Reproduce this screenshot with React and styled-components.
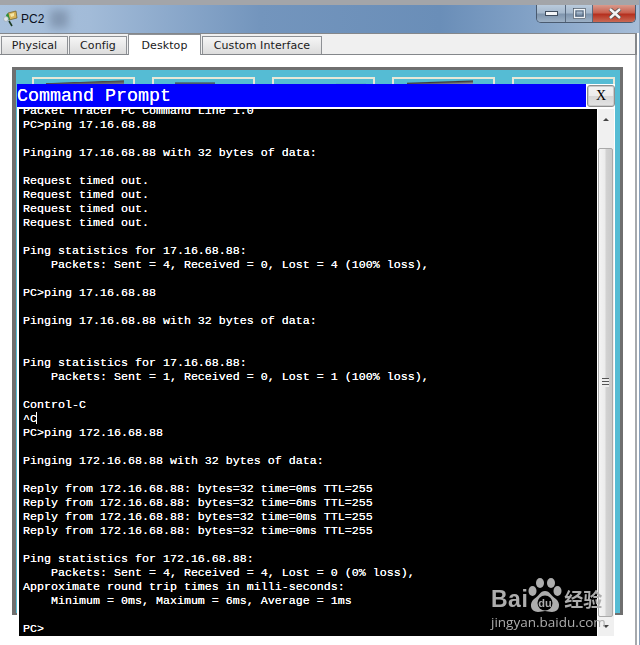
import styled, { createGlobalStyle } from "styled-components"

const GlobalStyle = createGlobalStyle`
  html, body {
    margin: 0;
    padding: 0;
    background: #fff;
  }
`

const Window = styled.div`
  position: relative;
  width: 640px;
  height: 645px;
  box-sizing: border-box;
  overflow: hidden;
  display: flex;
  flex-direction: column;
  font-family: "DejaVu Sans", "Liberation Sans", sans-serif;
  background: #fff;
  border-right: 1px solid #8aa0ba;
`

const TitleBar = styled.div`
  height: 28px;
  flex: none;
  display: flex;
  align-items: flex-start;
  justify-content: space-between;
  border-top: 5px solid #a3a5a9;
  margin-right: -1px;
  background: linear-gradient(90deg, #a9c1dc 0, #a2bbd8 90px, #7395bd 260px, #6a8eb8 440px, #85a4c8 540px, #a6bdd8 640px);
`

const TitleLeft = styled.div`
  display: flex;
  align-items: center;
  gap: 3px;
  height: 27px;
  padding-left: 3px;
`

const TitleText = styled.span`
  font-family: "Liberation Sans", sans-serif;
  font-size: 12px;
  color: #0a1020;
`

const Smudge = styled.span`
  width: 18px;
  height: 18px;
  margin-left: 3px;
  background: #8398b2;
  filter: blur(4px);
`

const Controls = styled.div`
  display: flex;
  width: 100px;
  height: 18px;
  margin-right: 4px;
  border: 1px solid #4a5b70;
  border-top: none;
  border-radius: 0 0 5px 5px;
  overflow: hidden;
  box-sizing: border-box;
`

const ControlButton = styled.div`
  width: ${p => p.$w}px;
  flex: none;
  display: flex;
  align-items: center;
  justify-content: center;
  border-right: ${p => (p.$close ? "none" : "1px solid #5a6b80")};
  box-sizing: border-box;
  background: ${p =>
    p.$close
      ? "linear-gradient(#d99a8c 0, #c8604f 45%, #b5301f 55%, #c96a55 100%)"
      : "linear-gradient(#b9cadc 0, #a5b8cc 45%, #7f95ad 55%, #9db1c6 100%)"};
`

const TabStrip = styled.div`
  height: 22px;
  flex: none;
  display: flex;
  align-items: flex-end;
  gap: 1px;
  padding-left: 1px;
  margin-right: 2px;
  background: #f0f0f0;
  border-top: 1px solid #84878b;
  border-bottom: 1px solid #84878b;
  border-right: 2px solid #84878b;
  box-sizing: border-box;
`

const Tab = styled.div`
  width: ${p => p.$w}px;
  height: ${p => (p.$active ? 21 : 18)}px;
  box-sizing: border-box;
  display: flex;
  align-items: center;
  justify-content: center;
  font-size: 11px;
  letter-spacing: 0.1px;
  color: #1a1a1a;
  border: 1px solid #8e9195;
  border-bottom: none;
  margin-bottom: ${p => (p.$active ? -1 : 0)}px;
  background: ${p => (p.$active ? "#fff" : "linear-gradient(#f6f6f6, #dcdcdc)")};
  position: relative;
`

const Panel = styled.div`
  flex: 1;
  margin-right: 2px;
  padding: 12px 12px 0 12px;
  background: #fff;
  border-right: 2px solid #a6a9ad;
`

const DesktopFrame = styled.div`
  width: 611px;
  height: 548px;
  box-sizing: border-box;
  border: 3px solid #6f6f6f;
  border-bottom-width: 2px;
  border-left-width: 4px;
  background: #55bcd4;
  padding: 7px 0 0 16px;
`

const TileRow = styled.div`
  display: flex;
  gap: 17px;
`

const Tile = styled.div`
  width: 103px;
  height: 12px;
  box-sizing: border-box;
  border: 2px solid #e8e8d8;
  padding-left: ${p => p.$left}px;
`

const TileArt = styled.div`
  width: ${p => p.$w}px;
  height: 5px;
  margin-top: 1px;
  background: ${p => p.$tone};
`

const CommandWindow = styled.div`
  position: absolute;
  left: 17px;
  top: 84px;
  width: 598px;
  height: 552px;
  background: #fff;
  display: flex;
  flex-direction: column;
`

const PromptHeader = styled.div`
  height: 23px;
  flex: none;
  display: flex;
  gap: 1px;
`

const PromptTitle = styled.div`
  flex: 1;
  padding-top: 2px;
  box-sizing: border-box;
  background: #0000ff;
  color: #fff;
  font-family: "Liberation Mono", monospace;
  font-size: 18.33px;
  line-height: 21px;
  white-space: pre;
  text-shadow: 0 0 0.6px #fff;
`

const CloseBox = styled.div`
  width: 28px;
  height: 22px;
  margin-top: 1px;
  box-sizing: border-box;
  border: 1px solid #8f8f8f;
  border-radius: 3px;
  box-shadow: inset 0 0 0 1px #c9c9c9;
  background: linear-gradient(#f2f2f2 0, #ececec 50%, #d6d6d6 52%, #e4e4e4 100%);
  display: flex;
  align-items: center;
  justify-content: center;
  font-family: "Liberation Serif", serif;
  font-size: 14px;
  color: #000;
`

const PromptBody = styled.div`
  flex: 1;
  min-height: 0;
  display: flex;
  margin-top: 2px;
  padding-left: 2px;
  gap: 1px;
`

const Terminal = styled.div`
  width: 578px;
  background: #000;
  overflow: hidden;
  padding-left: 4px;
  box-sizing: border-box;
`

const Output = styled.pre`
  margin: -5px 0 0;
  color: #fff;
  font-family: "Liberation Mono", "Courier New", monospace;
  font-size: 11.67px;
  line-height: 14px;
  text-shadow: 0 0 0.5px #fff;
`

const Caret = styled.span`
  display: inline-block;
  width: 1px;
  height: 12px;
  margin-left: -1px;
  vertical-align: -2px;
  background: #fff;
`

const ScrollBar = styled.div`
  width: 16px;
  flex: none;
  display: flex;
  flex-direction: column;
  align-items: center;
  background: #f0f0f0;
`

const ScrollArrow = styled.div`
  flex: none;
  height: ${p => p.$h}px;
  width: 100%;
  display: flex;
  align-items: center;
  justify-content: center;
  &::before {
    content: "";
    border-left: 3px solid transparent;
    border-right: 3px solid transparent;
    ${p => (p.$up ? "border-bottom: 3px solid #444;" : "border-top: 3px solid #444;")}
  }
`

const ScrollTrack = styled.div`
  flex: 1;
  width: 100%;
  padding-top: 19px;
  box-sizing: border-box;
`

const ScrollThumb = styled.div`
  width: 15px;
  height: 469px;
  box-sizing: border-box;
  border: 1px solid #a9a9a9;
  border-radius: 2px;
  background: linear-gradient(90deg, #f4f4f4 0, #ececec 45%, #d2d2d2 55%, #c9c9c9 100%);
  display: flex;
  align-items: center;
  justify-content: center;
`

const Grip = styled.div`
  width: 7px;
  height: 9px;
  background: repeating-linear-gradient(#555 0, #555 1px, #eee 1px, #eee 3px);
`

const Watermark = styled.div`
  position: absolute;
  left: 491px;
  top: 577px;
  width: 116px;
  color: #adadad;
  font-family: "Open Sans", "Liberation Sans", sans-serif;
  filter: blur(0.3px);
`

const BrandRow = styled.div`
  display: flex;
  align-items: flex-end;
  height: 37px;
`

const BrandWord = styled.span`
  font-size: 23px;
  line-height: 30px;
  font-weight: 700;
  font-family: "Liberation Sans", sans-serif;
  letter-spacing: 0.5px;
`

const BrandCn = styled.span`
  font-family: "Noto Sans CJK SC", sans-serif;
  font-size: 19px;
  line-height: 30px;
  font-weight: 700;
  margin-left: 2px;
`

const BrandUrl = styled.div`
  font-size: 13.5px;
  line-height: 16px;
  margin-top: 0;
  white-space: nowrap;
`

const TRANSCRIPT = `Packet Tracer PC Command Line 1.0
PC>ping 17.16.68.88

Pinging 17.16.68.88 with 32 bytes of data:

Request timed out.
Request timed out.
Request timed out.
Request timed out.

Ping statistics for 17.16.68.88:
    Packets: Sent = 4, Received = 0, Lost = 4 (100% loss),

PC>ping 17.16.68.88

Pinging 17.16.68.88 with 32 bytes of data:


Ping statistics for 17.16.68.88:
    Packets: Sent = 1, Received = 0, Lost = 1 (100% loss),

Control-C
^C`

const TRANSCRIPT_END = `
PC>ping 172.16.68.88

Pinging 172.16.68.88 with 32 bytes of data:

Reply from 172.16.68.88: bytes=32 time=0ms TTL=255
Reply from 172.16.68.88: bytes=32 time=6ms TTL=255
Reply from 172.16.68.88: bytes=32 time=0ms TTL=255
Reply from 172.16.68.88: bytes=32 time=0ms TTL=255

Ping statistics for 172.16.68.88:
    Packets: Sent = 4, Received = 4, Lost = 0 (0% loss),
Approximate round trip times in milli-seconds:
    Minimum = 0ms, Maximum = 6ms, Average = 1ms

PC>`

const TILES = [
  { left: 12, w: 78, tone: "linear-gradient(178deg, transparent 35%, #4a4a4a 45%, #8a8f94 100%)" },
  { left: 21, w: 40, tone: "linear-gradient(#55bcd4 30%, #4a5a62 60%, #3d6f80 100%)" },
  { left: 62, w: 30, tone: "linear-gradient(#55bcd4 55%, #4f9fb6 100%)" },
  { left: 13, w: 66, tone: "linear-gradient(178deg, transparent 30%, #3c3c3c 45%, #c4c8cc 100%)" },
  { left: 36, w: 40, tone: "linear-gradient(#55bcd4 55%, #7fc4d6 100%)" },
]

function AppIcon() {
  return (
    <svg width="15" height="17" viewBox="0 0 15 17">
      <path d="M5 3 L13 1 L14 8 L6 10 Z" fill="#d9b45a" stroke="#6b5a20" strokeWidth="0.7" />
      <path d="M5 3 L7 9 L4 11 L3 5 Z" fill="#2f8f3a" />
      <path d="M7 4 L11 3 L11 6 L8 7 Z" fill="#f3e6a8" />
      <circle cx="3" cy="9" r="2.4" fill="#dfe6ea" stroke="#9aa5ad" strokeWidth="0.6" />
      <path d="M6 11 L9 16" stroke="#1c3a22" strokeWidth="1.6" />
    </svg>
  )
}

function MinimizeGlyph() {
  return (
    <svg width="13" height="6" viewBox="0 0 13 6">
      <rect x="0.5" y="0.5" width="12" height="4" fill="#f4f6f8" stroke="#3f4d5e" />
    </svg>
  )
}

function MaximizeGlyph() {
  return (
    <svg width="13" height="11" viewBox="0 0 13 11">
      <rect x="1" y="1" width="11" height="9" fill="none" stroke="#f0f3f6" strokeWidth="2" />
      <rect x="0.5" y="0.5" width="12" height="10" fill="none" stroke="#3f4d5e" strokeWidth="0.7" />
      <rect x="3" y="3" width="7" height="5" fill="none" stroke="#3f4d5e" strokeWidth="0.7" />
    </svg>
  )
}

function CloseGlyph() {
  return (
    <svg width="14" height="11" viewBox="0 0 14 11">
      <path d="M2 1 L12 10 M12 1 L2 10" stroke="#4d4d4d" strokeWidth="4" />
      <path d="M2 1 L12 10 M12 1 L2 10" stroke="#f4f4f4" strokeWidth="2.4" />
    </svg>
  )
}

function PawMark() {
  return (
    <svg width="34" height="37" viewBox="0 0 34 37" style={{ flex: "none" }}>
      <ellipse cx="12" cy="6" rx="4" ry="5" fill="currentColor" />
      <ellipse cx="23" cy="6" rx="4" ry="5" fill="currentColor" />
      <ellipse cx="4.5" cy="14" rx="4" ry="5" fill="currentColor" />
      <ellipse cx="29.5" cy="14" rx="4" ry="5" fill="currentColor" />
      <path d="M17 14 C22 14 23 19 28 22 C33 26 32 35 24 35 C21 35 19 34 17 34 C15 34 13 35 10 35 C2 35 1 26 6 22 C11 19 12 14 17 14 Z" fill="currentColor" />
      <circle cx="17" cy="26" r="7.5" fill="#000" />
      <text x="17" y="30" textAnchor="middle" fontSize="11" fontWeight="700" fontFamily="Liberation Sans, sans-serif" fill="currentColor">du</text>
    </svg>
  )
}

export default function App() {
  return (
    <Window>
      <GlobalStyle />
      <TitleBar>
        <TitleLeft>
          <AppIcon />
          <TitleText>PC2</TitleText>
          <Smudge />
        </TitleLeft>
        <Controls>
          <ControlButton $w={29}><MinimizeGlyph /></ControlButton>
          <ControlButton $w={27}><MaximizeGlyph /></ControlButton>
          <ControlButton $w={44} $close><CloseGlyph /></ControlButton>
        </Controls>
      </TitleBar>
      <TabStrip>
        <Tab $w={67}>Physical</Tab>
        <Tab $w={58}>Config</Tab>
        <Tab $w={73} $active>Desktop</Tab>
        <Tab $w={120}>Custom Interface</Tab>
      </TabStrip>
      <Panel>
        <DesktopFrame>
          <TileRow>
            {TILES.map(t => (
              <Tile key={t.left} $left={t.left}>
                <TileArt $w={t.w} $tone={t.tone} />
              </Tile>
            ))}
          </TileRow>
        </DesktopFrame>
      </Panel>
      <CommandWindow>
        <PromptHeader>
          <PromptTitle>Command Prompt</PromptTitle>
          <CloseBox>X</CloseBox>
        </PromptHeader>
        <PromptBody>
          <Terminal>
            <Output>{TRANSCRIPT}<Caret />{TRANSCRIPT_END}</Output>
          </Terminal>
          <ScrollBar>
            <ScrollArrow $up $h={20} />
            <ScrollTrack>
              <ScrollThumb><Grip /></ScrollThumb>
            </ScrollTrack>
            <ScrollArrow $h={19} />
          </ScrollBar>
        </PromptBody>
      </CommandWindow>
      <Watermark>
        <BrandRow>
          <BrandWord>Bai</BrandWord>
          <PawMark />
          <BrandCn>经验</BrandCn>
        </BrandRow>
        <BrandUrl>jingyan.baidu.com</BrandUrl>
      </Watermark>
    </Window>
  )
}
